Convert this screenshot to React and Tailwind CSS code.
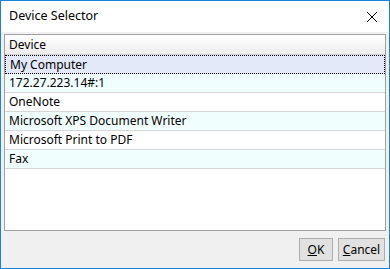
import React from 'react';

const devices = [
    'My Computer',
    '172.27.223.14#:1',
    'OneNote',
    'Microsoft XPS Document Writer',
    'Microsoft Print to PDF',
    'Fax',
];

const App = () => {
    return (
        <div
            className="w-[390px] h-[269px] flex flex-col border border-[#1883d7] bg-[#f0f0f0] text-[12px] text-black overflow-hidden"
            style={{ fontFamily: '"Segoe UI", "Noto Sans", "Liberation Sans", sans-serif' }}
        >
            {/* Title bar */}
            <div className="h-[31px] bg-white flex items-center justify-between pl-[8px] pr-[10px] shrink-0">
                <span className="text-[12.5px] leading-none">Device Selector</span>
                <svg width="12" height="12" viewBox="0 0 12 12" className="mr-[1px]">
                    <path d="M1 1 L11 11 M11 1 L1 11" stroke="#000" strokeWidth="1" fill="none" />
                </svg>
            </div>

            <div className="flex-1 flex flex-col px-[3px] pt-[2px]">
                {/* List */}
                <div className="h-[197px] border border-[#a0a0a0] bg-white flex flex-col">
                    <div className="h-[20px] flex items-center px-[4px] bg-gradient-to-b from-white to-[#ededed] border-b border-[#d5d5d5] text-[12px]">
                        Device
                    </div>
                    {devices.map((name, i) => (
                        <div
                            key={name}
                            className={`h-[19px] flex items-center px-[4px] border-b ${
                                i === 0
                                    ? 'bg-[#e3e9f9] border border-dotted border-black'
                                    : i % 2 === 1
                                    ? 'bg-[#f0fefe] border-[#d6d6d6]'
                                    : 'bg-white border-[#d6d6d6]'
                            }`}
                        >
                            {name}
                        </div>
                    ))}
                </div>

                {/* Buttons */}
                <div className="flex justify-end gap-[5px] pt-[7px] pr-[1px]">
                    <button className="w-[34px] h-[23px] bg-[#e1e1e1] border border-[#adadad] text-[12px] leading-none">
                        <span className="underline">O</span>K
                    </button>
                    <button className="w-[47px] h-[23px] bg-[#e1e1e1] border border-[#adadad] text-[12px] leading-none">
                        <span className="underline">C</span>ancel
                    </button>
                </div>
            </div>
        </div>
    );
};

export default App;
